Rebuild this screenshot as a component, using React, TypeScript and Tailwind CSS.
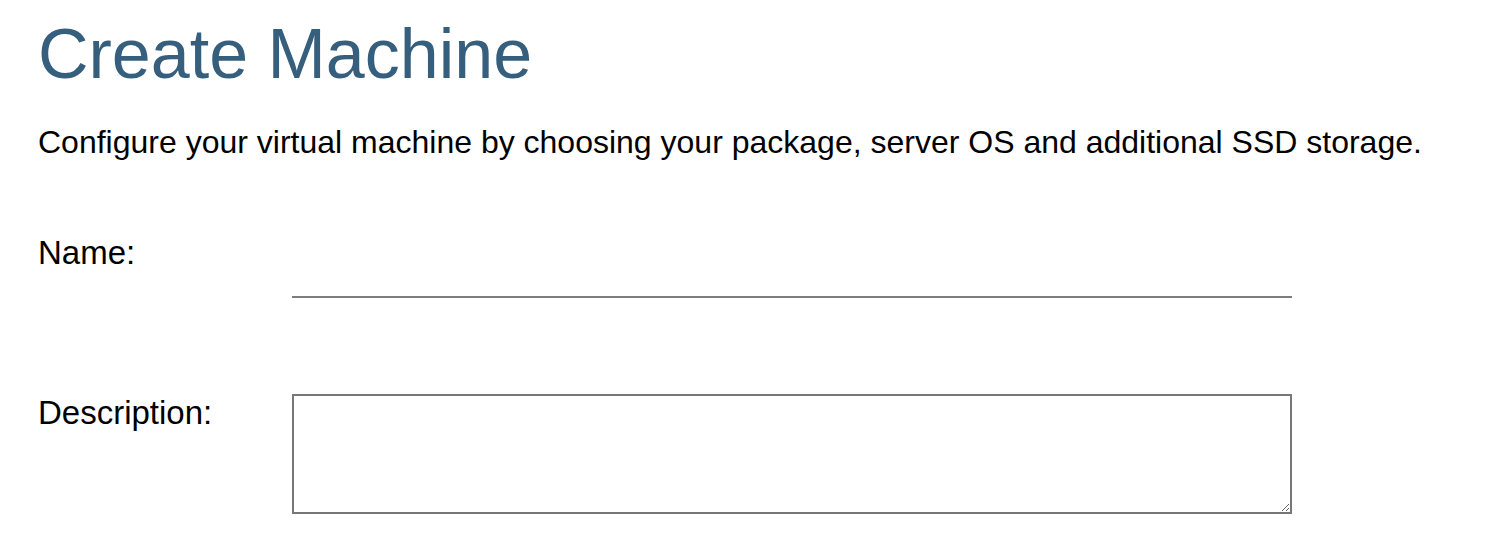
import React from 'react';

const App: React.FC = () => {
  return (
    <div className="min-h-screen w-full bg-white px-[38px] pt-[14px] text-black" style={{ fontFamily: '"Liberation Sans", Arial, sans-serif' }}>
      <h1 className="text-[70px] leading-[80px] text-[#365e7d]">Create Machine</h1>
      <p className="mt-[29px] text-[32px] leading-[38px]">
        Configure your virtual machine by choosing your package, server OS and additional SSD storage.
      </p>
      <form className="mt-[73px] flex flex-col">
        <div className="flex items-start">
          <label className="w-[254px] text-[33px] leading-[38px]">Name:</label>
          <input type="text" className="mt-[40px] h-[24px] w-[1000px] border-b-2 border-[#7d7d7d] outline-none" />
        </div>
        <div className="mt-[96px] flex items-start">
          <label className="w-[254px] text-[33px] leading-[38px]">Description:</label>
          <textarea className="h-[120px] w-[1000px] border-2 border-[#777777] outline-none" />
        </div>
      </form>
    </div>
  );
};

export default App;
